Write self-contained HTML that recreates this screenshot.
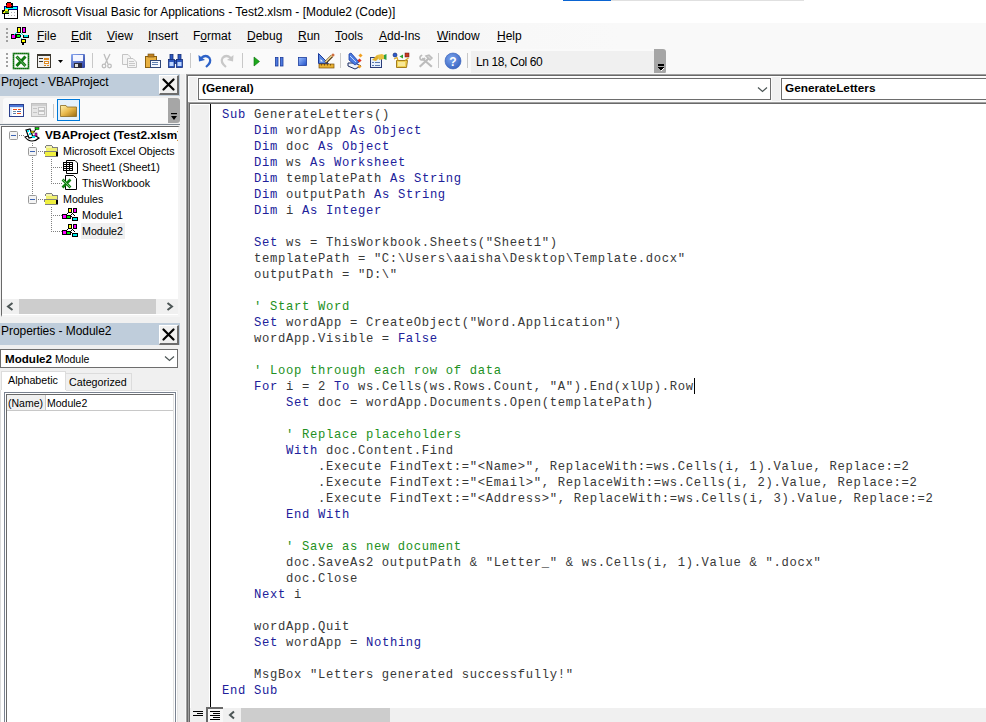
<!DOCTYPE html>
<html><head><meta charset="utf-8">
<style>
*{box-sizing:border-box;margin:0;padding:0}
html,body{width:986px;height:722px;overflow:hidden;background:#f0f0f0;font-family:"Liberation Sans",sans-serif;font-size:12px;color:#000}
.a{position:absolute}
#title{left:0;top:0;width:986px;height:23px;background:#fff}
#rebar{left:0;top:23px;width:986px;height:51px;background:#f9f9f9}
#menuband{left:0;top:23px;width:986px;height:26px;background:linear-gradient(to right,#efefef 0px,#f3f3f3 250px,#f8f8f8 520px,#f9f9f9 620px)}
#tband{left:3px;top:49px;width:662px;height:25px;background:#fafafa;border-radius:3px 0 0 0}
.mi{position:absolute;top:29px;font-size:12px;line-height:14px}
.mi u{text-decoration:underline;text-decoration-thickness:1px;text-underline-offset:1px}
.code{position:absolute;left:222px;top:107px;font-family:"Liberation Mono",monospace;font-size:12.2px;letter-spacing:0.68px;line-height:16px;white-space:pre;color:#383838}
.tr{font-size:10.7px;line-height:14px;white-space:nowrap}
.k{color:#20209a}
.c{color:#229022}
</style></head><body>
<!-- Title bar -->
<div id="title" class="a"></div>
<div class="a" style="left:23px;top:4px;font-size:12px;line-height:16px;color:#000">Microsoft Visual Basic for Applications - Test2.xlsm - [Module2 (Code)]</div>
<div class="a" style="left:563px;top:0;width:48px;height:1px;background:#0a64d2"></div>
<div class="a" style="left:611px;top:0;width:193px;height:1px;background:#e0e0e0"></div>
<!-- title icon -->
<svg class="a" style="left:0;top:0" width="20" height="20" viewBox="0 0 20 20" shape-rendering="crispEdges">
<rect x="4" y="6" width="14" height="13" fill="#000"/>
<rect x="4" y="6" width="14" height="4" fill="#000080"/>
<rect x="5" y="7" width="12" height="2" fill="#00ffff"/>
<rect x="5" y="10" width="12" height="8" fill="#fff"/>
<g fill="#b0b0b0"><rect x="11" y="12" width="1" height="1"/><rect x="14" y="12" width="1" height="1"/><rect x="8" y="15" width="1" height="1"/><rect x="11" y="15" width="1" height="1"/><rect x="14" y="15" width="1" height="1"/></g>
<rect x="6" y="3" width="7" height="5" fill="#000"/><rect x="7" y="2" width="4" height="1" fill="#000"/><rect x="12" y="4" width="1" height="3" fill="#000"/>
<rect x="7" y="3" width="4" height="4" fill="#ff0000"/><rect x="6" y="5" width="6" height="1" fill="#ff0000"/>
<rect x="2" y="10" width="7" height="4" fill="#000"/><rect x="3" y="12" width="2" height="1" fill="#ffff00"/><rect x="4" y="11" width="2" height="1" fill="#ffff00"/><rect x="5" y="9" width="3" height="2" fill="#ffff00"/>
<rect x="5" y="11" width="4" height="2" fill="#5a9a20"/><rect x="4" y="14" width="4" height="0" fill="#000"/>
</svg>

<!-- Rebar -->
<div id="rebar" class="a"></div>
<div id="menuband" class="a"></div>
<div id="tband" class="a"></div>
<!-- menu grip -->
<div class="a" style="left:6px;top:28px;width:2px;height:2px;background:#a0a0a0"></div>
<div class="a" style="left:6px;top:32px;width:2px;height:2px;background:#a0a0a0"></div>
<div class="a" style="left:6px;top:36px;width:2px;height:2px;background:#a0a0a0"></div>
<div class="a" style="left:6px;top:40px;width:2px;height:2px;background:#a0a0a0"></div>
<!-- VBA menu icon -->
<svg class="a" style="left:8px;top:24px" width="24" height="22" viewBox="8 24 24 22" shape-rendering="crispEdges">
<g fill="#000">
<rect x="17" y="27" width="4" height="6"/><rect x="22" y="27" width="4" height="6"/>
<rect x="11" y="34" width="5" height="5"/><rect x="16" y="34" width="5" height="4"/>
<rect x="23" y="35" width="6" height="3"/><rect x="21" y="39" width="5" height="4"/><rect x="22" y="43" width="2" height="2"/>
</g>
<g fill="#ffff00"><rect x="18" y="28" width="2" height="4"/><rect x="22" y="40" width="3" height="2"/></g>
<g fill="#ff00ff"><rect x="23" y="28" width="2" height="4"/><rect x="12" y="35" width="3" height="3"/></g>
<rect x="17" y="35" width="3" height="2" fill="#00ff00"/>
<g fill="#00e0e0"><rect x="14" y="34" width="1" height="1"/><rect x="15" y="33" width="1" height="1"/><rect x="16" y="32" width="1" height="1"/>
<rect x="20" y="34" width="1" height="1"/><rect x="21" y="33" width="1" height="1"/><rect x="22" y="34" width="1" height="1"/>
<rect x="24" y="35" width="4" height="2"/><rect x="20" y="37" width="1" height="1"/><rect x="21" y="38" width="1" height="1"/></g>
</svg>
<div class="mi" style="left:37px"><u>F</u>ile</div>
<div class="mi" style="left:71px"><u>E</u>dit</div>
<div class="mi" style="left:107px"><u>V</u>iew</div>
<div class="mi" style="left:148px"><u>I</u>nsert</div>
<div class="mi" style="left:193px">F<u>o</u>rmat</div>
<div class="mi" style="left:247px"><u>D</u>ebug</div>
<div class="mi" style="left:298px"><u>R</u>un</div>
<div class="mi" style="left:335px"><u>T</u>ools</div>
<div class="mi" style="left:379px"><u>A</u>dd-Ins</div>
<div class="mi" style="left:437px"><u>W</u>indow</div>
<div class="mi" style="left:497px"><u>H</u>elp</div>

<!-- Toolbar -->
<!-- toolbar grip -->
<div class="a" style="left:6px;top:53px;width:2px;height:2px;background:#a0a0a0"></div>
<div class="a" style="left:6px;top:57px;width:2px;height:2px;background:#a0a0a0"></div>
<div class="a" style="left:6px;top:61px;width:2px;height:2px;background:#a0a0a0"></div>
<div class="a" style="left:6px;top:65px;width:2px;height:2px;background:#a0a0a0"></div>
<svg class="a" style="left:0;top:49px" width="666" height="25" viewBox="0 49 666 25">
<!-- excel -->
<rect x="13.5" y="53.5" width="15" height="15" fill="#fff" stroke="#0a700a" stroke-width="1.6"/>
<rect x="13" y="53" width="16" height="16" fill="none" stroke="#fff" stroke-width="0.5" stroke-dasharray="1 1" opacity=".6"/>
<rect x="15" y="55" width="12" height="12" fill="#fff"/>
<path d="M16.5 56.5 L25.5 66 M25.5 56.5 L16.5 66" stroke="#137a13" stroke-width="3"/>
<path d="M16.5 56.5 L25.5 66" stroke="#8fd08f" stroke-width=".7"/>
<!-- userform -->
<rect x="37.5" y="54.5" width="13" height="13" fill="#f0f0f0" stroke="#3c3830"/>
<rect x="37" y="54" width="14" height="2" fill="#3c3830"/>
<rect x="39" y="58" width="4" height="1" fill="#3c3830"/><rect x="39" y="61" width="4" height="1" fill="#3c3830"/>
<rect x="44" y="58" width="5" height="2" fill="#e08a20"/><rect x="44.5" y="61.5" width="4" height="2" fill="#fff" stroke="#e08a20"/>
<rect x="44" y="65" width="2" height="1" fill="#e08a20"/><rect x="47" y="65" width="2" height="1" fill="#e08a20"/>
<path d="M58 60 L63 60 L60.5 63Z" fill="#000"/>
<!-- save -->
<defs><linearGradient id="sv" x1="0" y1="0" x2="1" y2="1"><stop offset="0" stop-color="#8aa8f0"/><stop offset="1" stop-color="#2a3fa0"/></linearGradient>
<linearGradient id="bl" x1="0" y1="0" x2="1" y2="1"><stop offset="0" stop-color="#9cc0ff"/><stop offset="1" stop-color="#1f4fc8"/></linearGradient></defs>
<rect x="71" y="54" width="14" height="14" rx="1" fill="url(#sv)"/>
<rect x="73" y="55" width="10" height="6" fill="#f4f6ff"/>
<rect x="74" y="63" width="8" height="5" fill="#2a2a3a"/><rect x="75" y="64" width="3" height="3" fill="#e0e0e0"/>
<!-- sep -->
<rect x="92" y="53" width="1" height="15" fill="#c8c8c8"/>
<!-- cut (disabled) -->
<g stroke="#bdbdbd" fill="none" stroke-width="1.3">
<path d="M104 54 L108 64 M110 54 L105 64"/>
<circle cx="104" cy="66" r="1.8"/><circle cx="109.5" cy="66" r="1.8"/>
</g>
<!-- copy (disabled) -->
<g fill="#f4f4f4" stroke="#c4c4c4">
<path d="M122.5 54.5 L128 54.5 L130.5 57 L130.5 64.5 L122.5 64.5Z"/>
<path d="M127.5 58.5 L133 58.5 L136.5 62 L136.5 67.5 L127.5 67.5Z"/>
</g>
<g fill="#c8c8c8"><rect x="129" y="61" width="5" height="1"/><rect x="129" y="63" width="6" height="1"/><rect x="129" y="65" width="6" height="1"/></g>
<!-- paste -->
<rect x="145.5" y="56.5" width="11" height="11" fill="#e8b040" stroke="#8a6010"/>
<rect x="148" y="54" width="6" height="3" fill="#c08020" stroke="#6a4a10" stroke-width=".6"/>
<rect x="150.5" y="60.5" width="10" height="7" fill="#f4f8ff" stroke="#304878"/>
<rect x="152" y="62" width="6" height="1" fill="#6080b0"/><rect x="152" y="64" width="6" height="1" fill="#6080b0"/>
<!-- find binoculars -->
<g fill="#2d58c0" stroke="#16307a" stroke-width=".8">
<rect x="168.5" y="59.5" width="6" height="8"/><rect x="176.5" y="59.5" width="6" height="8"/>
<rect x="170" y="54.5" width="3" height="5"/><rect x="178" y="54.5" width="3" height="5"/>
<rect x="174.5" y="60.5" width="2" height="3"/>
</g>
<rect x="169.5" y="62" width="4" height="4" fill="#c0d8ff"/><rect x="177.5" y="62" width="4" height="4" fill="#c0d8ff"/>
<!-- sep -->
<rect x="190" y="53" width="1" height="15" fill="#c8c8c8"/>
<!-- undo -->
<path d="M201 58 Q206 54 209.5 58 Q212 62 206 67" fill="none" stroke="#2e63c8" stroke-width="2.2"/>
<path d="M198.5 55 L199 61.5 L205 60Z" fill="#2e63c8"/>
<!-- redo disabled -->
<path d="M231 58 Q226 54 222.5 58 Q220 62 226 67" fill="none" stroke="#c8c8c8" stroke-width="2.2"/>
<path d="M233.5 55 L233 61.5 L227 60Z" fill="#c8c8c8"/>
<!-- sep -->
<rect x="242" y="53" width="1" height="15" fill="#c8c8c8"/>
<!-- run -->
<path d="M254 57 L259.5 61.5 L254 66Z" fill="#1ca81c" stroke="#0a700a" stroke-width=".6"/>
<!-- break -->
<rect x="275.5" y="57.5" width="2.5" height="8.5" fill="#4d7ae0" stroke="#1c3c9c" stroke-width=".8"/>
<rect x="280.5" y="57.5" width="2.5" height="8.5" fill="#4d7ae0" stroke="#1c3c9c" stroke-width=".8"/>
<!-- reset -->
<rect x="298.5" y="57.5" width="8" height="8" fill="url(#bl)" stroke="#1c3c9c" stroke-width=".8"/>
<!-- design mode -->
<path d="M318.5 53.5 L318.5 63.5 L328.5 63.5Z" fill="#5a88e0" stroke="#1c3c9c"/>
<path d="M320.5 59 L320.5 61.5 L323 61.5Z" fill="#fff"/>
<rect x="319" y="64" width="15" height="4" fill="#e8b030" stroke="#7a5010" stroke-width=".7"/>
<g fill="#7a5010"><rect x="321" y="64" width="1" height="1.5"/><rect x="324" y="64" width="1" height="1.5"/><rect x="327" y="64" width="1" height="1.5"/><rect x="330" y="64" width="1" height="1.5"/></g>
<path d="M325.5 62.5 L332 56" stroke="#4a3010" stroke-width="3"/>
<path d="M325.5 62 L332 55.5" stroke="#f0d890" stroke-width="1.6"/>
<circle cx="333" cy="55" r="1.5" fill="#d07040"/>
<!-- sep -->
<rect x="340" y="53" width="1" height="15" fill="#c8c8c8"/>
<!-- project explorer -->
<path d="M348 63 L355 63 L361 66 L355 69 L348 66Z" fill="#eef2fa" stroke="#1a2a60" stroke-width="1"/>
<path d="M349 54 L351 53 L359 62 L355 65 L349 60Z" fill="#4a7ae0" stroke="#1a3aa0" stroke-width=".8"/>
<path d="M350 56 L356 62" stroke="#c0d8ff" stroke-width="1"/>
<rect x="359" y="54" width="3" height="3" fill="#f0a020" transform="rotate(45 360.5 55.5)"/>
<rect x="358" y="59" width="3" height="3" fill="#e03020" transform="rotate(45 359.5 60.5)"/>
<rect x="358" y="65" width="3" height="3" fill="#f0a020" transform="rotate(45 359.5 66.5)"/>
<!-- properties -->
<rect x="370.5" y="57.5" width="11" height="10" fill="#e6f0ff" stroke="#2a3c78"/>
<rect x="372" y="62" width="2" height="1" fill="#5a78b0"/><rect x="375" y="62" width="5" height="1" fill="#5a78b0"/><rect x="372" y="65" width="2" height="1" fill="#5a78b0"/><rect x="375" y="65" width="5" height="1" fill="#5a78b0"/>
<path d="M372 60 L377 55 L380 57 L376 61Z" fill="#e0b030"/>
<path d="M377 55 L382 54 L386 56 L384 59 L379 60Z" fill="#e8c040"/>
<path d="M384 55 L386.5 54 L386.5 60 L384 59Z" fill="#30a040"/>
<!-- object browser -->
<circle cx="395" cy="55" r="2" fill="#2a5ad0" stroke="#102060" stroke-width=".6"/>
<path d="M403 54.5 L403 58.5 L399.5 56.5Z" fill="#30a030"/>
<rect x="405" y="53" width="4" height="4" fill="#c83a20" stroke="#601810" stroke-width=".5"/>
<path d="M396.5 60.5 L407.5 60.5 L406.5 67.5 L396.5 67.5Z" fill="#f0d050" stroke="#9a7010" stroke-width=".9"/>
<path d="M394 59 L397 57.5 L398 60.5 M408.5 58 L405 60.5" stroke="#d8a820" stroke-width="1.2" fill="none"/>
<rect x="398" y="62" width="7" height="4" fill="#f8e898"/>
<!-- toolbox disabled -->
<g fill="none" stroke="#bcbcbc" stroke-linecap="square">
<path d="M423 59 L431 66" stroke-width="2.2"/>
<path d="M421.5 55.5 Q419 57 420.5 59.5 Q423 61 424.5 58.5" stroke-width="1.6"/>
<path d="M428 59 L420.5 66" stroke-width="2.2"/>
<path d="M426 56 L429 55 L432 58 L430 60Z" stroke-width="1.5" fill="#d4d4d4"/>
</g>
<!-- sep -->
<rect x="438" y="53" width="1" height="15" fill="#c8c8c8"/>
<!-- help -->
<defs><radialGradient id="hg" cx=".4" cy=".35" r=".7"><stop offset="0" stop-color="#7aa4ee"/><stop offset="1" stop-color="#3a64c0"/></radialGradient></defs>
<circle cx="453" cy="61" r="8" fill="url(#hg)" stroke="#3460b8" stroke-width=".6"/>
<text x="453" y="65.5" text-anchor="middle" font-family="Liberation Sans" font-weight="bold" font-size="12" fill="#fff">?</text>
<!-- sep -->
<rect x="467" y="53" width="1" height="15" fill="#c8c8c8"/>
</svg>

<div class="a" style="left:471px;top:51px;width:184px;height:22px;background:#f0f0f0"></div>
<div class="a" style="left:476px;top:54px;font-size:12px;line-height:16px;letter-spacing:-0.4px">Ln 18, Col 60</div>
<div class="a" style="left:654px;top:49px;width:12px;height:25px;background:#a6a6a6;border-radius:0 3px 3px 0"></div>
<svg class="a" style="left:657px;top:63px" width="8" height="9" viewBox="0 0 8 9" shape-rendering="crispEdges"><rect x="1" y="1" width="6" height="2" fill="#000"/><path d="M1 4 L7 4 L4 8Z" fill="#000"/><path d="M4 8 L7 5" stroke="#fff" stroke-width="1"/></svg>

<!-- Left panels -->
<!-- ===== Project panel ===== -->
<div class="a" style="left:0;top:74px;width:180px;height:22px;background:#bfcddb"></div>
<div class="a" style="left:1px;top:74px;font-size:12px;letter-spacing:-0.1px;line-height:16px">Project - VBAProject</div>
<div class="a" style="left:159px;top:75px;width:20px;height:20px;background:#f0f0f0;border-top:1px solid #fff;border-left:1px solid #fff;border-right:2px solid #6d6d6d;border-bottom:2px solid #6d6d6d"></div>
<svg class="a" style="left:162px;top:78px" width="13" height="13" viewBox="0 0 13 13"><path d="M1.5 1.5 L11.5 11.5 M11.5 1.5 L1.5 11.5" stroke="#000" stroke-width="2.2" stroke-linecap="round"/></svg>
<!-- project toolbar -->
<div class="a" style="left:3px;top:98px;width:177px;height:25px;background:#fafafa;border-radius:3px 0 0 0"></div>
<svg class="a" style="left:9px;top:104px" width="15" height="13" viewBox="0 0 15 13">
<rect x="0.5" y="0.5" width="14" height="12" fill="#dbe8fb" stroke="#2b3f8c"/>
<rect x="1" y="1" width="13" height="2" fill="#4c78d8"/>
<rect x="3" y="4" width="11" height="8" fill="#fff"/>
<rect x="4" y="5" width="4" height="1" fill="#f05020"/><rect x="9" y="5" width="3" height="1" fill="#f05020"/>
<rect x="4" y="7" width="3" height="1" fill="#7090a0"/><rect x="8" y="7" width="4" height="1" fill="#4070b0"/>
<rect x="4" y="9" width="3" height="1" fill="#6080b0"/><rect x="8" y="9" width="4" height="1" fill="#f05020"/>
</svg>
<svg class="a" style="left:31px;top:103px" width="16" height="14" viewBox="0 0 16 14">
<rect x="0.5" y="0.5" width="15" height="13" fill="#e6e6e6" stroke="#c0c0c0"/>
<rect x="1" y="1" width="14" height="2" fill="#cfcfcf"/>
<rect x="2" y="5" width="4" height="1" fill="#c4c4c4"/><rect x="2" y="9" width="4" height="1" fill="#c4c4c4"/>
<rect x="7.5" y="4.5" width="6" height="3" fill="#f4f4f4" stroke="#c4c4c4"/><rect x="7.5" y="8.5" width="6" height="3" fill="#f4f4f4" stroke="#c4c4c4"/>
</svg>
<div class="a" style="left:53px;top:104px;width:1px;height:14px;background:#c8c8c8"></div>
<div class="a" style="left:57px;top:99px;width:23px;height:22px;background:#e5f1fb;border:1px solid #0078d7"></div>
<svg class="a" style="left:60px;top:104px" width="17" height="13" viewBox="0 0 17 13">
<defs><linearGradient id="fg" x1="0" y1="0" x2="1" y2="1"><stop offset="0" stop-color="#fff3b0"/><stop offset=".5" stop-color="#e8b84a"/><stop offset="1" stop-color="#9a6a10"/></linearGradient></defs>
<path d="M0.5 1.5 L6 1.5 L7 3 L16.5 3 L16.5 12.5 L0.5 12.5Z" fill="url(#fg)" stroke="#8a6a20" stroke-width="0.8"/>
</svg>
<div class="a" style="left:168px;top:98px;width:12px;height:25px;background:#a6a6a6;border-radius:0 3px 3px 0"></div>
<svg class="a" style="left:170px;top:113px" width="8" height="8" viewBox="0 0 8 8"><rect x="1" y="0" width="6" height="1.2" fill="#000"/><path d="M1 3 L7 3 L4 7Z" fill="#000"/></svg>
<div class="a" style="left:0;top:124px;width:180px;height:1px;background:#7a8590"></div>
<!-- tree -->
<div class="a" style="left:1px;top:126px;width:179px;height:191px;background:#fff;border-top:1px solid #696969;border-left:1px solid #696969;border-right:2px solid #f4f4f4;border-bottom:2px solid #f4f4f4"></div>
<!-- tree lines -->
<svg class="a" style="left:0;top:126px" width="180" height="120" viewBox="0 126 180 120">
<g fill="#808080">
<!-- h line row0 -->
<rect x="19" y="135" width="1" height="1"/><rect x="21" y="135" width="1" height="1"/><rect x="23" y="135" width="1" height="1"/>
<!-- v line x=32 -->
<rect x="32" y="143" width="1" height="1"/><rect x="32" y="145" width="1" height="1"/>
<rect x="32" y="157" width="1" height="1"/><rect x="32" y="159" width="1" height="1"/><rect x="32" y="161" width="1" height="1"/><rect x="32" y="163" width="1" height="1"/><rect x="32" y="165" width="1" height="1"/><rect x="32" y="167" width="1" height="1"/><rect x="32" y="169" width="1" height="1"/><rect x="32" y="171" width="1" height="1"/><rect x="32" y="173" width="1" height="1"/><rect x="32" y="175" width="1" height="1"/><rect x="32" y="177" width="1" height="1"/><rect x="32" y="179" width="1" height="1"/><rect x="32" y="181" width="1" height="1"/><rect x="32" y="183" width="1" height="1"/><rect x="32" y="185" width="1" height="1"/><rect x="32" y="187" width="1" height="1"/><rect x="32" y="189" width="1" height="1"/><rect x="32" y="191" width="1" height="1"/><rect x="32" y="193" width="1" height="1"/>
<!-- h lines from expanders -->
<rect x="38" y="151" width="1" height="1"/><rect x="40" y="151" width="1" height="1"/><rect x="42" y="151" width="1" height="1"/>
<rect x="38" y="199" width="1" height="1"/><rect x="40" y="199" width="1" height="1"/><rect x="42" y="199" width="1" height="1"/>
<!-- v line x=51 (excel objects) -->
<rect x="51" y="159" width="1" height="1"/><rect x="51" y="161" width="1" height="1"/><rect x="51" y="163" width="1" height="1"/><rect x="51" y="165" width="1" height="1"/><rect x="51" y="167" width="1" height="1"/><rect x="51" y="169" width="1" height="1"/><rect x="51" y="171" width="1" height="1"/><rect x="51" y="173" width="1" height="1"/><rect x="51" y="175" width="1" height="1"/><rect x="51" y="177" width="1" height="1"/><rect x="51" y="179" width="1" height="1"/><rect x="51" y="181" width="1" height="1"/><rect x="51" y="183" width="1" height="1"/>
<rect x="53" y="167" width="1" height="1"/><rect x="55" y="167" width="1" height="1"/><rect x="57" y="167" width="1" height="1"/><rect x="59" y="167" width="1" height="1"/><rect x="61" y="167" width="1" height="1"/>
<rect x="53" y="183" width="1" height="1"/><rect x="55" y="183" width="1" height="1"/><rect x="57" y="183" width="1" height="1"/><rect x="59" y="183" width="1" height="1"/><rect x="61" y="183" width="1" height="1"/>
<!-- v line x=51 (modules) -->
<rect x="51" y="207" width="1" height="1"/><rect x="51" y="209" width="1" height="1"/><rect x="51" y="211" width="1" height="1"/><rect x="51" y="213" width="1" height="1"/><rect x="51" y="215" width="1" height="1"/><rect x="51" y="217" width="1" height="1"/><rect x="51" y="219" width="1" height="1"/><rect x="51" y="221" width="1" height="1"/><rect x="51" y="223" width="1" height="1"/><rect x="51" y="225" width="1" height="1"/><rect x="51" y="227" width="1" height="1"/><rect x="51" y="229" width="1" height="1"/><rect x="51" y="231" width="1" height="1"/>
<rect x="53" y="215" width="1" height="1"/><rect x="55" y="215" width="1" height="1"/><rect x="57" y="215" width="1" height="1"/><rect x="59" y="215" width="1" height="1"/><rect x="61" y="215" width="1" height="1"/>
<rect x="53" y="231" width="1" height="1"/><rect x="55" y="231" width="1" height="1"/><rect x="57" y="231" width="1" height="1"/><rect x="59" y="231" width="1" height="1"/><rect x="61" y="231" width="1" height="1"/>
</g>
<!-- expanders -->
<g>
<rect x="9.5" y="131.5" width="8" height="8" rx="1" fill="#f4f4f4" stroke="#9a9a9a"/><rect x="11" y="135" width="5" height="1" fill="#3c64b4"/>
<rect x="28.5" y="147.5" width="8" height="8" rx="1" fill="#f4f4f4" stroke="#9a9a9a"/><rect x="30" y="151" width="5" height="1" fill="#3c64b4"/>
<rect x="28.5" y="195.5" width="8" height="8" rx="1" fill="#f4f4f4" stroke="#9a9a9a"/><rect x="30" y="199" width="5" height="1" fill="#3c64b4"/>
</g>
<!-- project icon -->
<g transform="translate(24,127)">
<path d="M1 10 Q4 14 8 14 Q12 14 15 11 L12 9 L4 9Z" fill="#fff" stroke="#000" stroke-width="1.2"/>
<path d="M2 3 L6 2 L9 10 L5 11Z" fill="#fff" stroke="#000" stroke-width="1.2"/>
<rect x="3" y="3" width="2" height="2" fill="#00e0f0"/><rect x="5" y="6" width="2" height="2" fill="#00e0f0"/><rect x="8" y="9" width="3" height="2" fill="#00e0f0"/>
<rect x="7" y="4" width="3" height="2" fill="#f0f000" stroke="#000" stroke-width=".5"/>
<rect x="11" y="6" width="2" height="3" fill="#f000f0" stroke="#000" stroke-width=".5"/>
<rect x="11" y="0.5" width="4" height="2" fill="#00e000" stroke="#000" stroke-width=".5"/>
<path d="M10 5 L12 2" stroke="#000"/>
</g>
<!-- folders -->
<g id="fold" shape-rendering="crispEdges">
<rect x="46" y="145" width="6" height="1" fill="#808080"/><rect x="45" y="146" width="1" height="2" fill="#808080"/><rect x="52" y="146" width="1" height="1" fill="#808080"/>
<rect x="45" y="147" width="13" height="1" fill="#808080"/><rect x="57" y="147" width="1" height="9" fill="#808080"/>
<rect x="46" y="146" width="6" height="5" fill="#f4f4b0"/><rect x="46" y="148" width="11" height="3" fill="#f0f070"/>
<rect x="44" y="151" width="13" height="1" fill="#808080"/><rect x="44" y="151" width="1" height="3" fill="#808080"/><rect x="45" y="154" width="1" height="3" fill="#808080"/>
<rect x="45" y="152" width="12" height="4" fill="#f0f040"/><rect x="45" y="156" width="13" height="1" fill="#808080"/>
<rect x="56" y="152" width="2" height="4" fill="#000"/>
</g>
<g transform="translate(0,48)"><g shape-rendering="crispEdges">
<rect x="46" y="145" width="6" height="1" fill="#808080"/><rect x="45" y="146" width="1" height="2" fill="#808080"/><rect x="52" y="146" width="1" height="1" fill="#808080"/>
<rect x="45" y="147" width="13" height="1" fill="#808080"/><rect x="57" y="147" width="1" height="9" fill="#808080"/>
<rect x="46" y="146" width="6" height="5" fill="#f4f4b0"/><rect x="46" y="148" width="11" height="3" fill="#f0f070"/>
<rect x="44" y="151" width="13" height="1" fill="#808080"/><rect x="44" y="151" width="1" height="3" fill="#808080"/><rect x="45" y="154" width="1" height="3" fill="#808080"/>
<rect x="45" y="152" width="12" height="4" fill="#f0f040"/><rect x="45" y="156" width="13" height="1" fill="#808080"/>
<rect x="56" y="152" width="2" height="4" fill="#000"/>
</g></g>
<!-- sheet icon -->
<g>
<path d="M66.5 160.5 L75 160.5 L77.5 163 L77.5 173.5 L66.5 173.5Z" fill="#fff" stroke="#000"/>
<rect x="63" y="162" width="10" height="9" fill="#000"/>
<g fill="#fff"><rect x="64" y="163" width="2" height="1"/><rect x="67" y="163" width="2" height="1"/><rect x="70" y="163" width="2" height="1"/>
<rect x="64" y="165" width="2" height="1"/><rect x="67" y="165" width="2" height="1"/><rect x="70" y="165" width="2" height="1"/>
<rect x="64" y="167" width="2" height="1"/><rect x="67" y="167" width="2" height="1"/><rect x="70" y="167" width="2" height="1"/>
<rect x="64" y="169" width="2" height="1"/><rect x="67" y="169" width="2" height="1"/><rect x="70" y="169" width="2" height="1"/></g>
</g>
<!-- workbook icon -->
<g>
<path d="M65.5 175.5 L73.5 175.5 L76.5 178.5 L76.5 189.5 L65.5 189.5Z" fill="#fff" stroke="#000"/>
<path d="M62.5 179.5 L70.5 187.5 M70.5 179.5 L62.5 187.5" stroke="#108010" stroke-width="2.6"/>
<path d="M62.5 179.5 L70.5 187.5" stroke="#c0f0c0" stroke-width=".6"/>
</g>
<!-- module icons -->
<g id="modi" shape-rendering="crispEdges">
<g fill="#000">
<rect x="68" y="208" width="4" height="5"/><rect x="73" y="208" width="4" height="5"/>
<rect x="62" y="214" width="5" height="5"/><rect x="66" y="215" width="5" height="4"/><rect x="72" y="217" width="6" height="4"/>
<rect x="67" y="213" width="1" height="1"/><rect x="66" y="214" width="1" height="1"/><rect x="72" y="213" width="1" height="1"/><rect x="71" y="214" width="1" height="1"/><rect x="71" y="216" width="1" height="1"/><rect x="73" y="214" width="1" height="1"/><rect x="74" y="215" width="1" height="1"/>
</g>
<rect x="69" y="209" width="2" height="3" fill="#ffff00"/>
<rect x="74" y="209" width="2" height="3" fill="#ff00ff"/>
<rect x="63" y="215" width="3" height="3" fill="#ff00ff"/>
<rect x="67" y="216" width="3" height="2" fill="#00e000"/>
<rect x="73" y="218" width="4" height="2" fill="#00e8e8"/>
</g>
<g transform="translate(0,16)"><g shape-rendering="crispEdges">
<g fill="#000">
<rect x="68" y="208" width="4" height="5"/><rect x="73" y="208" width="4" height="5"/>
<rect x="62" y="214" width="5" height="5"/><rect x="66" y="215" width="5" height="4"/><rect x="72" y="217" width="6" height="4"/>
<rect x="67" y="213" width="1" height="1"/><rect x="66" y="214" width="1" height="1"/><rect x="72" y="213" width="1" height="1"/><rect x="71" y="214" width="1" height="1"/><rect x="71" y="216" width="1" height="1"/><rect x="73" y="214" width="1" height="1"/><rect x="74" y="215" width="1" height="1"/>
</g>
<rect x="69" y="209" width="2" height="3" fill="#ffff00"/>
<rect x="74" y="209" width="2" height="3" fill="#ff00ff"/>
<rect x="63" y="215" width="3" height="3" fill="#ff00ff"/>
<rect x="67" y="216" width="3" height="2" fill="#00e000"/>
<rect x="73" y="218" width="4" height="2" fill="#00e8e8"/>
</g></g>
</svg>
<div class="a" style="left:81px;top:223px;width:44px;height:16px;background:#f0f0f0"></div>
<div class="a tr" style="left:45px;top:128px;font-weight:bold;font-size:11.8px;width:133px;overflow:hidden;white-space:nowrap">VBAProject (Test2.xlsm)</div>
<div class="a tr" style="left:63px;top:144px">Microsoft Excel Objects</div>
<div class="a tr" style="left:82px;top:160px">Sheet1 (Sheet1)</div>
<div class="a tr" style="left:82px;top:176px">ThisWorkbook</div>
<div class="a tr" style="left:63px;top:192px">Modules</div>
<div class="a tr" style="left:82px;top:208px">Module1</div>
<div class="a tr" style="left:82px;top:224px">Module2</div>

<!-- tree scrollbar -->
<div class="a" style="left:2px;top:299px;width:176px;height:15px;background:#f0f0f0"></div>
<div class="a" style="left:19px;top:299px;width:137px;height:15px;background:#cdcdcd"></div>
<svg class="a" style="left:6px;top:302px" width="8" height="9" viewBox="0 0 8 9"><path d="M6.5 1 L2 4.5 L6.5 8" fill="none" stroke="#4d5656" stroke-width="2"/></svg>
<svg class="a" style="left:166px;top:302px" width="8" height="9" viewBox="0 0 8 9"><path d="M1.5 1 L6 4.5 L1.5 8" fill="none" stroke="#4d5656" stroke-width="2"/></svg>

<!-- ===== Properties panel ===== -->
<div class="a" style="left:0;top:323px;width:180px;height:22px;background:#bfcddb"></div>
<div class="a" style="left:1px;top:323px;font-size:12px;letter-spacing:-0.05px;line-height:16px">Properties - Module2</div>
<div class="a" style="left:159px;top:325px;width:20px;height:20px;background:#f0f0f0;border-top:1px solid #fff;border-left:1px solid #fff;border-right:2px solid #6d6d6d;border-bottom:2px solid #6d6d6d"></div>
<svg class="a" style="left:162px;top:328px" width="13" height="13" viewBox="0 0 13 13"><path d="M1.5 1.5 L11.5 11.5 M11.5 1.5 L1.5 11.5" stroke="#000" stroke-width="2.2" stroke-linecap="round"/></svg>
<div class="a" style="left:0;top:349px;width:178px;height:19px;background:#fff;border:1px solid #6d6d6d"></div>
<div class="a" style="left:5px;top:352px;font-size:10.5px;line-height:14px;white-space:pre"><b style="font-size:11.6px">Module2</b> Module</div>
<svg class="a" style="left:164px;top:355px" width="11" height="7" viewBox="0 0 11 7"><path d="M1 1.5 L5.5 5.5 L10 1.5" fill="none" stroke="#4d5656" stroke-width="1.2"/></svg>
<!-- tabs -->
<div class="a" style="left:65px;top:373px;width:67px;height:18px;background:#f0f0f0;border:1px solid #dcdcdc;border-bottom:none"></div>
<div class="a" style="left:69px;top:375px;font-size:10.7px;line-height:14px">Categorized</div>
<div class="a" style="left:1px;top:371px;width:65px;height:21px;background:#fff;border:1px solid #dcdcdc;border-bottom:none"></div>
<div class="a" style="left:8px;top:373px;font-size:10.7px;line-height:14px">Alphabetic</div>
<div class="a" style="left:0;top:390px;width:178px;height:332px;background:#fff;border-left:1px solid #dcdcdc;border-right:1px solid #e3e3e3"></div>
<div class="a" style="left:66px;top:390px;width:112px;height:1px;background:#e3e3e3"></div>
<div class="a" style="left:4px;top:392px;width:172px;height:330px;background:#fff;border:1px solid #7a8290;border-bottom:none"></div>
<div class="a" style="left:6px;top:394px;width:168px;height:328px;background:#fff;border-top:1px solid #696969;border-left:1px solid #696969;border-right:1px solid #e3e3e3"></div>
<div class="a" style="left:7px;top:395px;width:38px;height:15px;background:#f0f0f0"></div>
<div class="a" style="left:45px;top:395px;width:1px;height:15px;background:#c8c8c8"></div>
<div class="a" style="left:7px;top:410px;width:166px;height:1px;background:#c8c8c8"></div>
<div class="a" style="left:8px;top:396px;font-size:10.5px;line-height:14px">(Name)</div>
<div class="a" style="left:47px;top:396px;font-size:10.5px;line-height:14px">Module2</div>


<!-- Code window -->
<!-- Code window frame -->
<div class="a" style="left:185px;top:73px;width:801px;height:649px;background:#f8f8f8"></div>
<div class="a" style="left:186px;top:74px;width:800px;height:648px;background:#a0a0a0"></div>
<div class="a" style="left:187px;top:75px;width:799px;height:647px;background:#696969"></div>
<div class="a" style="left:188px;top:76px;width:798px;height:646px;background:#fff"></div>
<div class="a" style="left:189px;top:77px;width:797px;height:645px;background:#f0f0f0"></div>
<!-- dropdowns -->
<div class="a" style="left:197px;top:77px;width:575px;height:24px;background:#fafafa"></div>
<div class="a" style="left:198px;top:78px;width:573px;height:22px;background:#fff;border:1px solid #6d6d6d"></div>
<div class="a" style="left:202px;top:81px;font-weight:bold;font-size:11.8px;line-height:14px">(General)</div>
<svg class="a" style="left:757px;top:86px" width="11" height="7" viewBox="0 0 11 7"><path d="M1 1.5 L5.5 5.5 L10 1.5" fill="none" stroke="#4d5656" stroke-width="1.2"/></svg>
<div class="a" style="left:780px;top:77px;width:206px;height:24px;background:#fafafa"></div>
<div class="a" style="left:781px;top:78px;width:210px;height:22px;background:#fff;border:1px solid #6d6d6d"></div>
<div class="a" style="left:785px;top:81px;font-weight:bold;font-size:11.8px;line-height:14px">GenerateLetters</div>
<!-- code pane -->
<div class="a" style="left:188px;top:101px;width:798px;height:1px;background:#fafafa"></div>
<div class="a" style="left:188px;top:102px;width:798px;height:620px;background:#a0a0a0"></div>
<div class="a" style="left:189px;top:103px;width:797px;height:619px;background:#696969"></div>
<div class="a" style="left:190px;top:104px;width:796px;height:618px;background:#fff"></div>
<div class="a" style="left:191px;top:105px;width:18px;height:603px;background:#f0f0f0"></div>
<div class="a" style="left:210px;top:104px;width:1px;height:604px;background:#000"></div>
<div class="code"><span class="k">Sub</span> GenerateLetters()
    <span class="k">Dim</span> wordApp <span class="k">As</span> <span class="k">Object</span>
    <span class="k">Dim</span> doc <span class="k">As</span> <span class="k">Object</span>
    <span class="k">Dim</span> ws <span class="k">As</span> <span class="k">Worksheet</span>
    <span class="k">Dim</span> templatePath <span class="k">As</span> <span class="k">String</span>
    <span class="k">Dim</span> outputPath <span class="k">As</span> <span class="k">String</span>
    <span class="k">Dim</span> i <span class="k">As</span> <span class="k">Integer</span>

    <span class="k">Set</span> ws = ThisWorkbook.Sheets(&quot;Sheet1&quot;)
    templatePath = &quot;C:\Users\aaisha\Desktop\Template.docx&quot;
    outputPath = &quot;D:\&quot;

    <span class="c">&#x27; Start Word</span>
    <span class="k">Set</span> wordApp = CreateObject(&quot;Word.Application&quot;)
    wordApp.Visible = <span class="k">False</span>

    <span class="c">&#x27; Loop through each row of data</span>
    <span class="k">For</span> i = 2 <span class="k">To</span> ws.Cells(ws.Rows.Count, &quot;A&quot;).End(xlUp).Row
        <span class="k">Set</span> doc = wordApp.Documents.Open(templatePath)

        <span class="c">&#x27; Replace placeholders</span>
        <span class="k">With</span> doc.Content.Find
            .Execute FindText:=&quot;&lt;Name&gt;&quot;, ReplaceWith:=ws.Cells(i, 1).Value, Replace:=2
            .Execute FindText:=&quot;&lt;Email&gt;&quot;, ReplaceWith:=ws.Cells(i, 2).Value, Replace:=2
            .Execute FindText:=&quot;&lt;Address&gt;&quot;, ReplaceWith:=ws.Cells(i, 3).Value, Replace:=2
        <span class="k">End</span> <span class="k">With</span>

        <span class="c">&#x27; Save as new document</span>
        doc.SaveAs2 outputPath &amp; &quot;Letter_&quot; &amp; ws.Cells(i, 1).Value &amp; &quot;.docx&quot;
        doc.Close
    <span class="k">Next</span> i

    wordApp.Quit
    <span class="k">Set</span> wordApp = <span class="k">Nothing</span>

    MsgBox &quot;Letters generated successfully!&quot;
<span class="k">End</span> <span class="k">Sub</span></div>
<div class="a" style="left:694px;top:378px;width:1px;height:16px;background:#000"></div>
<!-- bottom bar -->
<div class="a" style="left:190px;top:708px;width:796px;height:14px;background:#f0f0f0"></div>
<div class="a" style="left:241px;top:708px;width:149px;height:14px;background:#cdcdcd"></div>
<!-- view buttons -->
<div class="a" style="left:191px;top:708px;width:15px;height:14px;background:#f0f0f0"></div>
<svg class="a" style="left:192px;top:709px" width="14" height="10" viewBox="0 0 14 10"><rect x="1" y="2" width="10" height="1" fill="#000"/><rect x="5" y="4" width="6" height="1" fill="#000"/><rect x="1" y="6" width="10" height="1" fill="#000"/></svg>
<div class="a" style="left:206px;top:707px;width:17px;height:15px;background:#f8f8f8;border-top:2px solid #696969;border-left:2px solid #696969"></div>
<svg class="a" style="left:208px;top:709px" width="14" height="13" viewBox="0 0 14 13"><rect x="2" y="2" width="10" height="1" fill="#000"/><rect x="5" y="4" width="7" height="1" fill="#000"/><rect x="2" y="6" width="10" height="1" fill="#000"/><rect x="5" y="8" width="7" height="1" fill="#000"/><rect x="2" y="10" width="10" height="1" fill="#000"/></svg>
<svg class="a" style="left:227px;top:710px" width="10" height="10" viewBox="0 0 10 10"><path d="M7 1.5 L3 5 L7 8.5" fill="none" stroke="#4d5656" stroke-width="2"/></svg>



</body></html>
